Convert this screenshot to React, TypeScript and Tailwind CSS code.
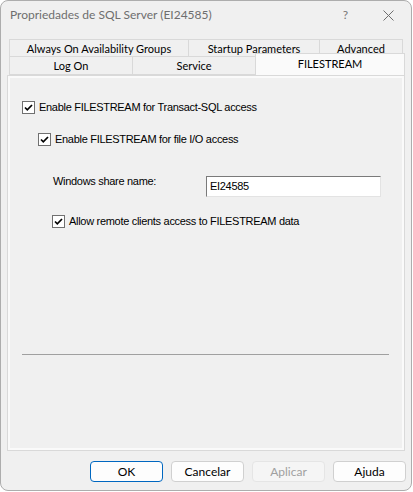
import React from "react";

function Check({ className = "" }: { className?: string }) {
  return (
    <span className={`flex h-[13px] w-[13px] shrink-0 items-center justify-center border border-[#707070] bg-white ${className}`}>
      <svg width="11" height="11" viewBox="0 0 11 11">
        <polyline points="2,5.5 4.3,7.8 9,3" fill="none" stroke="#000" strokeWidth="1.7" />
      </svg>
    </span>
  );
}

function Tab({ label, w, selected = false }: { label: string; w: string; selected?: boolean }) {
  return (
    <div
      className={`-ml-px flex items-center justify-center border border-[#d9d9d9] text-[11px] first:ml-0 ${w} ${
        selected ? "relative z-10 -mt-[2px] h-[22px] border-b-0 bg-[#fafafa]" : "h-full bg-[#f0f0f0]"
      }`}
    >
      <span className={selected ? "-mt-[2px]" : "mt-px"}>{label}</span>
    </div>
  );
}

function Btn({ label, kind = "normal" }: { label: string; kind?: "default" | "normal" | "disabled" }) {
  const styles = {
    default: "border-[#0067c0] bg-[#fdfdfd] text-black",
    normal: "border-[#d0d0d0] bg-[#fdfdfd] text-black",
    disabled: "border-[#e5e5e5] bg-[#f5f5f5] text-[#a0a0a0]",
  }[kind];
  return (
    <button className={`flex h-[21px] w-[73px] items-center justify-center rounded-[4px] border ${styles}`}>
      {label}
    </button>
  );
}

export default function App() {
  return (
    <div className="h-[492px] w-[413px] bg-white font-['Lato',sans-serif] text-[12px] leading-[16px] text-black">
      <div className="flex h-[491px] w-[412px] flex-col rounded-[8px] border border-[#adadad] bg-[#f0f0f0]">
        {/* title bar */}
        <div className="flex h-[38px] items-start pt-[6px] pl-[9px] text-[#6e6e6e]">
          <span>Propriedades de SQL Server (EI24585)</span>
          <span className="ml-auto mr-[35px] text-[#777]">?</span>
          <svg width="11" height="11" viewBox="0 0 11 11" className="mr-[17px] mt-[3px]">
            <path d="M0.5 0.5L10.5 10.5M10.5 0.5L0.5 10.5" stroke="#6e6e6e" strokeWidth="1" />
          </svg>
        </div>

        {/* tab rows */}
        <div className="ml-[8px] flex h-[18px]">
          <Tab label="Always On Availability Groups" w="w-[180px]" />
          <Tab label="Startup Parameters" w="w-[132px]" />
          <Tab label="Advanced" w="w-[84px]" />
        </div>
        <div className="ml-[8px] flex h-[19px] -mt-px items-end">
          <Tab label="Log On" w="w-[124px]" />
          <Tab label="Service" w="w-[124px]" />
          <Tab label="FILESTREAM" w="w-[150px]" selected />
        </div>

        {/* panel */}
        <div className="ml-[6px] h-[376px] w-[398px] border border-[#d9d9d9] bg-[#fafafa] p-[2px] font-['Liberation_Sans',Arial,sans-serif] text-[11px] leading-[13px] tracking-[-0.3px]">
          <div className="flex h-full flex-col bg-[#f0f0f0]">
            <div className="ml-[12px] mt-[23px] flex h-[13px] items-center gap-[4px]">
              <Check />
              <span>Enable FILESTREAM for Transact-SQL access</span>
            </div>
            <div className="ml-[28px] mt-[19px] flex h-[13px] items-center gap-[4px]">
              <Check />
              <span>Enable FILESTREAM for file I/O access</span>
            </div>
            <div className="ml-[43px] mt-[30px] flex h-[21px] items-start">
              <span className="mt-[-1px] w-[153px]">Windows share name:</span>
              <div className="flex h-[21px] w-[175px] items-center border border-t-[#7a7a7a] border-l-[#7a7a7a] border-r-[#e3e3e3] border-b-[#e3e3e3] bg-white pl-[3px]">
                EI24585
              </div>
            </div>
            <div className="ml-[42px] mt-[18px] flex h-[13px] items-center gap-[4px]">
              <Check />
              <span>Allow remote clients access to FILESTREAM data</span>
            </div>
            <div className="ml-[12px] mt-[126px] h-px w-[367px] bg-[#a0a0a0]" />
          </div>
        </div>

        {/* buttons */}
        <div className="mr-[5px] mt-[10px] flex justify-end gap-[8px]">
          <Btn label="OK" kind="default" />
          <Btn label="Cancelar" />
          <Btn label="Aplicar" kind="disabled" />
          <Btn label="Ajuda" />
        </div>
      </div>
    </div>
  );
}
